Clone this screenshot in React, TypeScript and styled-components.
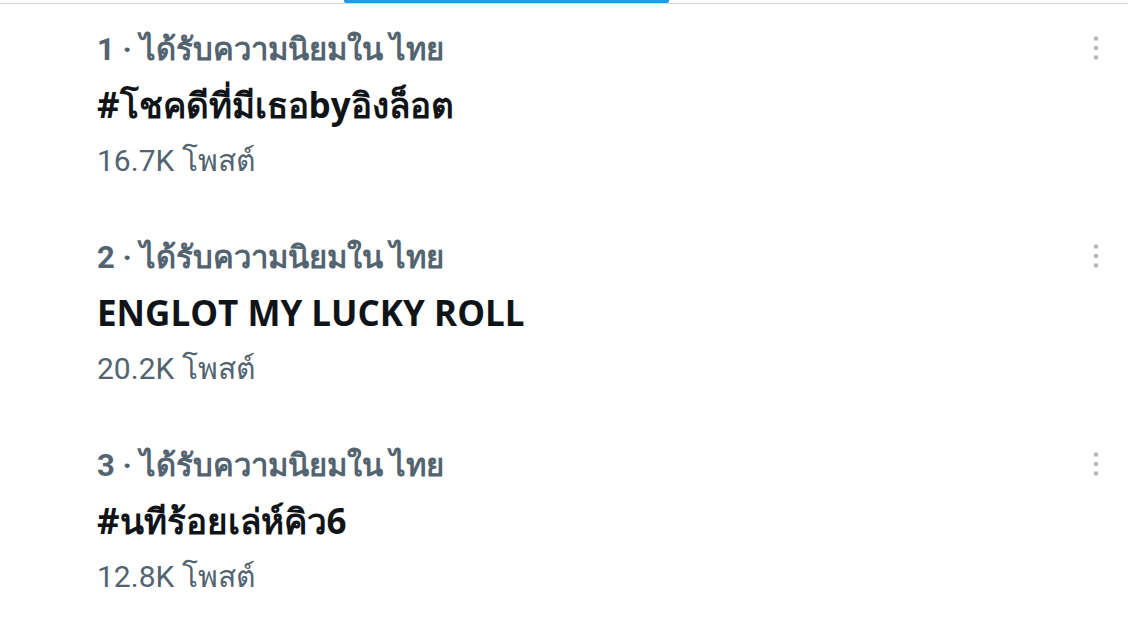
import React from "react";
import styled, { createGlobalStyle } from "styled-components";

const GlobalStyle = createGlobalStyle`
  html, body {
    margin: 0;
    padding: 0;
    background: #ffffff;
  }

  body {
    font-family: Roboto, "Noto Sans", "DejaVu Sans", sans-serif;
    -webkit-font-smoothing: antialiased;
  }
`;

const StyledPage = styled.div`
  width: 1128px;
  height: 633px;
  overflow: hidden;
  background: #ffffff;
`;

const StyledTabStrip = styled.div`
  display: flex;
  height: 3px;
  padding-left: 344px;
  border-bottom: 1px solid #cfd9de;
`;

const StyledIndicator = styled.div`
  width: 325px;
  height: 3px;
  border-radius: 0 0 2px 2px;
  background-color: #1d9bf0;
`;

const StyledList = styled.div`
  display: flex;
  flex-direction: column;
`;

const StyledTrend = styled.div`
  display: flex;
  justify-content: space-between;
  align-items: flex-start;
  height: 208px;
  box-sizing: border-box;
  padding: 28px 20px 0 97px;
`;

const StyledContent = styled.div`
  display: flex;
  flex-direction: column;
`;

const StyledMeta = styled.div`
  font-size: 31px;
  line-height: 36px;
  font-weight: 700;
  color: #536471;
  white-space: nowrap;
`;

const StyledTitle = styled.div`
  margin-top: 15px;
  font-family: "Open Sans", Roboto, sans-serif;
  font-size: 35px;
  line-height: 44px;
  font-weight: 700;
  color: #0f1419;
  white-space: nowrap;
`;

const StyledCount = styled.div`
  margin-top: 16px;
  font-size: 30px;
  line-height: 36px;
  font-weight: 400;
  color: #536471;
  white-space: nowrap;
`;

const StyledMoreButton = styled.button`
  display: flex;
  align-items: center;
  justify-content: center;
  width: 24px;
  height: 30px;
  margin-top: 1px;
  padding: 0;
  border: none;
  background: transparent;
  cursor: pointer;
`;

const MoreIcon = () => (
  <svg width="24" height="30" viewBox="0 0 24 30" aria-hidden="true">
    <circle cx="12" cy="5.5" r="2.3" fill="#b3b8bd" />
    <circle cx="12" cy="15" r="2.3" fill="#b3b8bd" />
    <circle cx="12" cy="24.5" r="2.3" fill="#b3b8bd" />
  </svg>
);

interface TrendInterface {
  rank: number;
  place: string;
  title: string;
  posts: string;
}

const trends: TrendInterface[] = [
  { rank: 1, place: "ไทย", title: "#โชคดีที่มีเธอbyอิงล็อต", posts: "16.7K" },
  { rank: 2, place: "ไทย", title: "ENGLOT MY LUCKY ROLL", posts: "20.2K" },
  { rank: 3, place: "ไทย", title: "#นทีร้อยเล่ห์คิว6", posts: "12.8K" }
];

const App = () => {
  return (
    <>
      <GlobalStyle />
      <StyledPage>
        <StyledTabStrip>
          <StyledIndicator />
        </StyledTabStrip>
        <StyledList>
          {trends.map((item) => (
            <StyledTrend key={item.rank}>
              <StyledContent>
                <StyledMeta>
                  {item.rank} · ได้รับความนิยมใน {item.place}
                </StyledMeta>
                <StyledTitle>{item.title}</StyledTitle>
                <StyledCount>{item.posts} โพสต์</StyledCount>
              </StyledContent>
              <StyledMoreButton aria-label="More">
                <MoreIcon />
              </StyledMoreButton>
            </StyledTrend>
          ))}
        </StyledList>
      </StyledPage>
    </>
  );
};

export default App;
